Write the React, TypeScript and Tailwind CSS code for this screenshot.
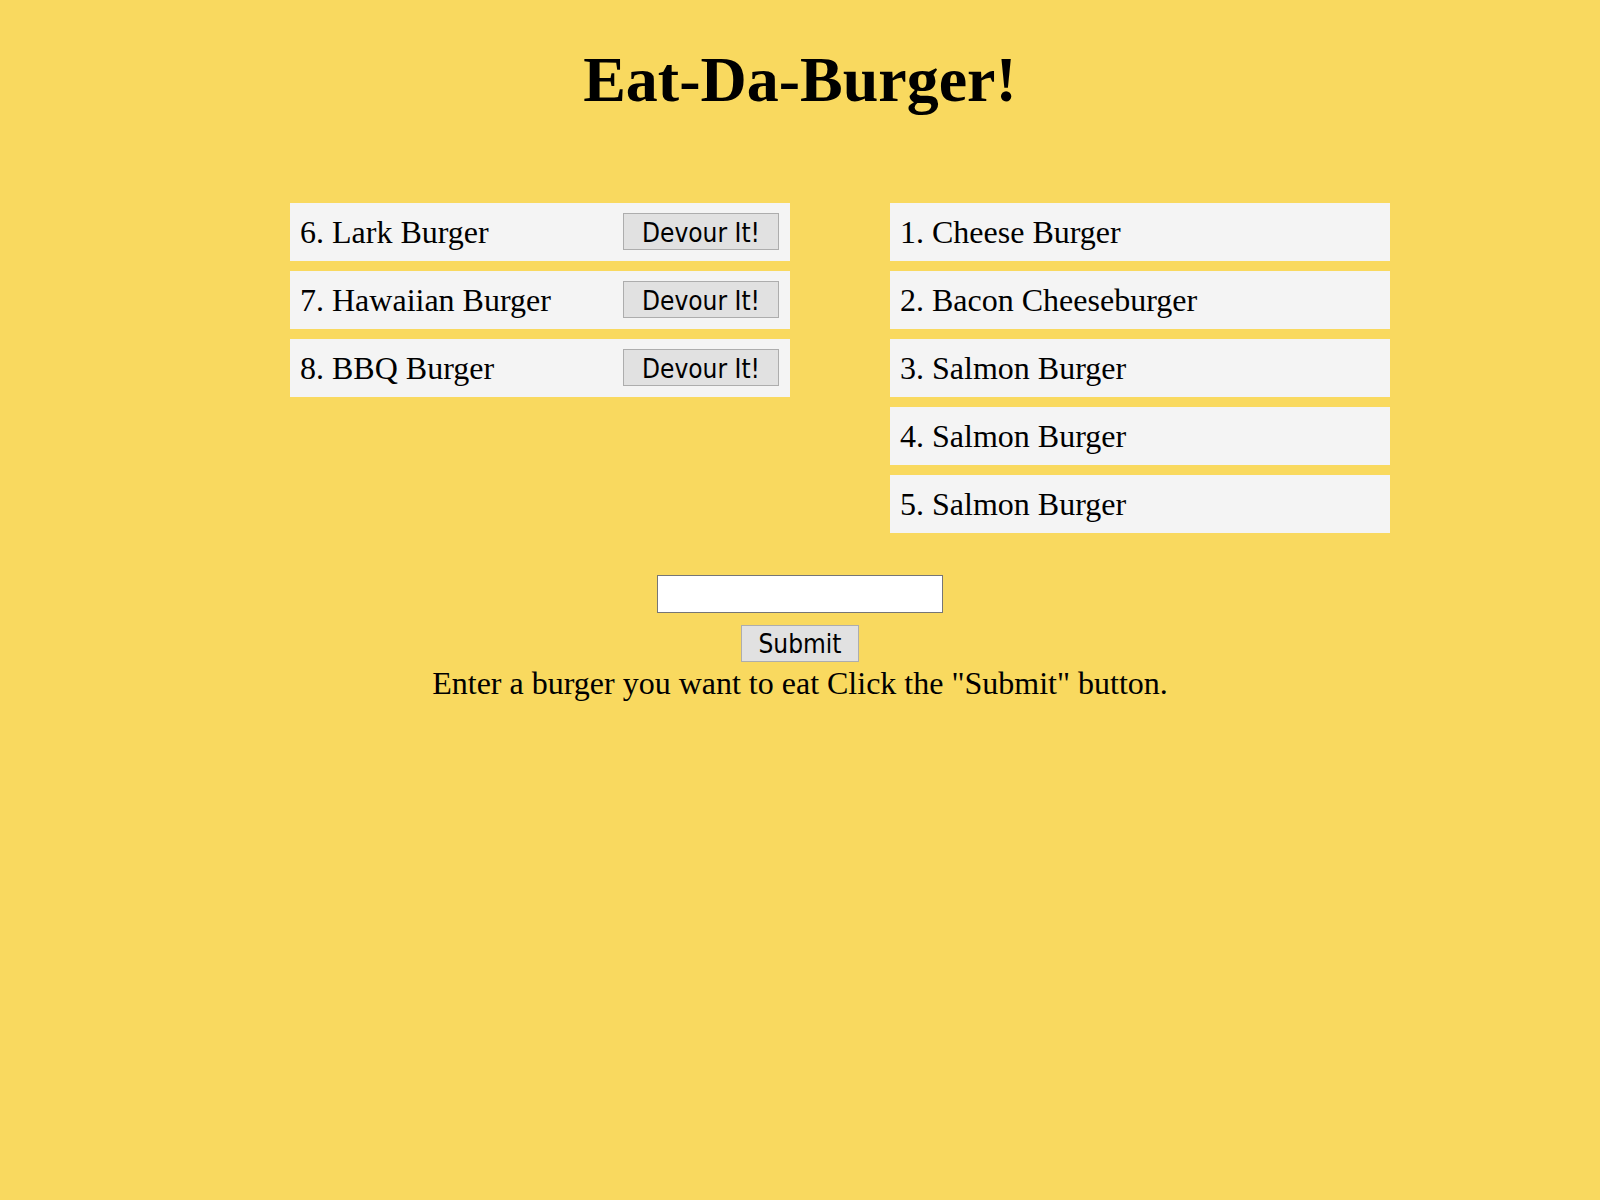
import React from "react";

const devoured = ["6. Lark Burger", "7. Hawaiian Burger", "8. BBQ Burger"];
const eaten = [
  "1. Cheese Burger",
  "2. Bacon Cheeseburger",
  "3. Salmon Burger",
  "4. Salmon Burger",
  "5. Salmon Burger",
];

const serif = "font-['Liberation_Serif','Times_New_Roman',serif]";
const btnFont = "font-['DejaVu_Sans_Condensed','Liberation_Sans',Arial,sans-serif]";

export default function App() {
  return (
    <div className={`min-h-[1200px] w-full bg-[#f9d95f] text-black ${serif}`}>
      <h1 className="pt-[43px] text-center text-[64px] font-bold leading-[73.6px]">
        Eat-Da-Burger!
      </h1>
      <div className="mt-[86px] flex gap-[100px] pl-[290px]">
        <div className="flex w-[500px] flex-col gap-[10px]">
          {devoured.map((b) => (
            <div
              key={b}
              className="flex h-[58px] items-center justify-between bg-[#f4f4f4] pl-[10px] pr-[11px]"
            >
              <span className="pt-[2px] text-[32px] leading-[36.8px]">{b}</span>
              <button
                className={`flex h-[37px] w-[156px] items-center justify-center border border-[#adadad] bg-[#e1e1e1] pt-[2px] text-[26px] leading-[30px] ${btnFont}`}
              >
                Devour It!
              </button>
            </div>
          ))}
        </div>
        <div className="flex w-[500px] flex-col gap-[10px]">
          {eaten.map((b, i) => (
            <div key={i} className="flex h-[58px] items-center bg-[#f4f4f4] px-[10px]">
              <span className="pt-[2px] text-[32px] leading-[36.8px]">{b}</span>
            </div>
          ))}
        </div>
      </div>
      <div className="mt-[42px] flex flex-col items-center">
        <input
          type="text"
          className="h-[38px] w-[286px] border border-[#767676] bg-white"
        />
        <button
          className={`mt-[12px] flex h-[37px] w-[118px] items-center justify-center border border-[#adadad] bg-[#e1e1e1] pt-[2px] text-[26px] leading-[30px] ${btnFont}`}
        >
          Submit
        </button>
        <p className="mt-[3px] text-[32px] leading-[36.8px]">
          Enter a burger you want to eat Click the "Submit" button.
        </p>
      </div>
    </div>
  );
}
